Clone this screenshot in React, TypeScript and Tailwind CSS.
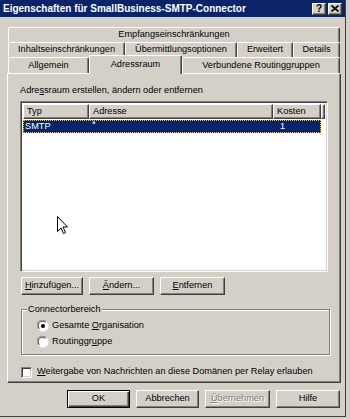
import React from "react";

const raised =
  "bg-[#d4d0c8] border border-t-white border-l-white border-r-[#404040] border-b-[#404040] shadow-[inset_-1px_-1px_0_#808080]";

function Tab({ w, label, className = "" }: { w: string; label: string; className?: string }) {
  return (
    <div
      className={`${w} h-full flex items-center justify-center border-t border-l border-t-white border-l-white border-r border-r-[#404040] shadow-[inset_-1px_0_0_#808080] rounded-tl-[2px] rounded-tr-[2px] ${className}`}
    >
      {label}
    </div>
  );
}

function Btn({ w, children, def = false, disabled = false }: { w: string; children: React.ReactNode; def?: boolean; disabled?: boolean }) {
  return (
    <div
      className={`${w} h-[18px] flex items-center justify-center ${
        def
          ? "border border-black shadow-[inset_1px_1px_0_#fff,inset_-1px_-1px_0_#404040,inset_-2px_-2px_0_#808080]"
          : raised
      } ${disabled ? "text-[#808080] [text-shadow:1px_1px_0_#fff]" : ""}`}
    >
      {children}
    </div>
  );
}

function Radio({ checked }: { checked?: boolean }) {
  return (
    <svg width="12" height="12" viewBox="0 0 12 12">
      <circle cx="6" cy="6" r="5.5" fill="#fff" />
      <path d="M1.5 9 A5 5 0 0 1 9 1.5" stroke="#808080" fill="none" strokeWidth="1" />
      <path d="M2.5 8.5 A4 4 0 0 1 8.5 2.5" stroke="#404040" fill="none" strokeWidth="1" />
      {checked && <circle cx="6" cy="6" r="2" fill="#000" />}
    </svg>
  );
}

export default function App() {
  return (
    <div className="w-[350px] h-[419px] bg-[#d4d0c8] overflow-hidden font-['Liberation_Sans',Arial,sans-serif] text-[9.2px] text-black relative">
      <div className="w-[346px] h-[417px] border-r border-b border-[#404040] flex flex-col">
        {/* Title bar */}
        <div className="h-[17px] bg-[#0a246a] flex items-center pl-[3px] pr-[3px]">
          <span className="flex-1 text-white font-bold text-[10px]">
            Eigenschaften für SmallBusiness-SMTP-Connector
          </span>
          <div className={`w-[14px] h-[12px] ${raised} flex items-center justify-center font-bold text-[10px] leading-none`}>?</div>
          <div className={`w-[14px] h-[12px] ml-[2px] ${raised} flex items-center justify-center`}>
            <svg width="8" height="7" viewBox="0 0 8 7">
              <path d="M0.5 0.5 L7.5 6.5 M7.5 0.5 L0.5 6.5" stroke="#000" strokeWidth="1.6" />
            </svg>
          </div>
        </div>

        {/* Tabs */}
        <div className="mt-[10px] ml-[8px] w-[332px] h-[15px] flex">
          <Tab w="w-[332px]" label="Empfangseinschränkungen" />
        </div>
        <div className="ml-[8px] w-[332px] h-[15px] flex">
          <Tab w="w-[117px]" label="Inhaltseinschränkungen" />
          <Tab w="w-[112px]" label="Übermittlungsoptionen" />
          <Tab w="w-[56px]" label="Erweitert" />
          <Tab w="w-[47px]" label="Details" />
        </div>
        <div className="ml-[8px] w-[332px] h-[16px] flex items-end relative z-10">
          <Tab w="w-[81px]" label="Allgemein" />
          <div className="w-[93px] h-[19px] -mb-[1px] bg-[#d4d0c8] flex items-start pt-[2px] justify-center border-t border-l border-t-white border-l-white border-r border-r-[#404040] shadow-[inset_-1px_0_0_#808080] rounded-tl-[2px] rounded-tr-[2px]">
            Adressraum
          </div>
          <Tab w="w-[158px]" label="Verbundene Routinggruppen" />
        </div>

        {/* Panel */}
        <div className="ml-[7px] w-[334px] h-[310px] border border-t-white border-l-white border-r-[#404040] border-b-[#404040] shadow-[inset_-1px_-1px_0_#808080] pl-[12px] pt-[10px] flex flex-col">
          <div className="h-[12px] leading-[12px]">
            Adre<span className="underline">s</span>sraum erstellen, ändern oder entfernen
          </div>

          {/* List */}
          <div className="mt-[5px] w-[308px] h-[171px] bg-white border border-t-[#808080] border-l-[#808080] border-r-white border-b-white shadow-[inset_1px_1px_0_#404040,inset_-1px_-1px_0_#d4d0c8] p-[2px] relative">
            <div className="flex h-[15px]">
              <div className={`w-[66px] h-full ${raised} pl-[3px] flex items-center`}>Typ</div>
              <div className={`w-[184px] h-full ${raised} pl-[3px] flex items-center`}>Adresse</div>
              <div className={`w-[48px] h-full ${raised} pl-[3px] flex items-center`}>Kosten</div>
              <div className={`flex-1 h-full ${raised}`} />
            </div>
            <div className="mt-[1px] w-[298px] h-[13px] bg-[#0a246a] text-white flex outline-1 outline-dotted outline-[#f0c040] -outline-offset-1">
              <div className="w-[66px] pl-[2px] flex items-center">SMTP</div>
              <div className="w-[184px] pl-[3px] leading-[9px]">*</div>
              <div className="w-[48px] pl-[7px] flex items-center">1</div>
            </div>
            {/* mouse cursor */}
            <svg className="absolute left-[36px] top-[114px]" width="12" height="19" viewBox="0 0 12 19">
              <path
                d="M0.5 0.5 L0.5 15.5 L4 12 L6.5 17.5 L8.5 16.5 L6 11 L10.5 11 Z"
                fill="#fff"
                stroke="#000"
                strokeWidth="1"
                strokeLinejoin="miter"
              />
            </svg>
          </div>

          {/* Buttons */}
          <div className="mt-[5px] ml-[1px] flex gap-[6px]">
            <Btn w="w-[62px]">
              <span><span className="underline">H</span>inzufügen...</span>
            </Btn>
            <Btn w="w-[65px]">
              <span><span className="underline">Ä</span>ndern...</span>
            </Btn>
            <Btn w="w-[65px]">
              <span><span className="underline">E</span>ntfernen</span>
            </Btn>
          </div>

          {/* Group box */}
          <div className="mt-[14px] ml-[1px] w-[309px] h-[46px] border border-[#808080] shadow-[1px_1px_0_#fff,inset_1px_1px_0_#fff] relative flex flex-col pl-[15px] pt-[10px] gap-[4px]">
            <div className="absolute -top-[7px] left-[5px] px-[1px] bg-[#d4d0c8] leading-[12px]">Connectorbereich</div>
            <div className="flex items-center gap-[3px] h-[12px]">
              <Radio checked />
              <span>Gesamte <span className="underline">O</span>rganisation</span>
            </div>
            <div className="flex items-center gap-[3px] h-[12px]">
              <Radio />
              <span>Routinggr<span className="underline">u</span>ppe</span>
            </div>
          </div>

          {/* Checkbox */}
          <div className="mt-[11px] ml-[1px] flex items-center gap-[5px] h-[12px]">
            <div className="w-[11px] h-[11px] bg-white border border-t-[#808080] border-l-[#808080] border-r-white border-b-white shadow-[inset_1px_1px_0_#404040,inset_-1px_-1px_0_#d4d0c8]" />
            <span><span className="underline">W</span>eitergabe von Nachrichten an diese Domänen per Relay erlauben</span>
          </div>
        </div>

        {/* Dialog buttons */}
        <div className="mt-[7px] ml-[67px] flex gap-[6px]">
          <Btn w="w-[63px]" def>OK</Btn>
          <Btn w="w-[63px]">Abbrechen</Btn>
          <Btn w="w-[65px]" disabled>
            <span><span className="underline">Ü</span>bernehmen</span>
          </Btn>
          <Btn w="w-[64px]">Hilfe</Btn>
        </div>
      </div>
    </div>
  );
}
